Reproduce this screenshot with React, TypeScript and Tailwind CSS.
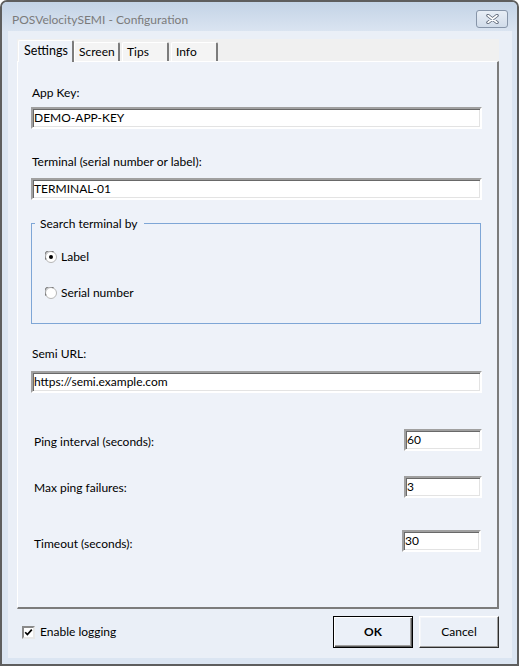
import React from "react";

const font = "font-['Lato','Noto_Sans',sans-serif]";

// Classic sunken edit box
function TextBox({ value, className = "" }: { value: string; className?: string }) {
  return (
    <div
      className={`h-[22px] flex items-center bg-white border-2 border-t-[#a0a0a0] border-l-[#a0a0a0] border-r-white border-b-white shadow-[inset_1px_1px_0_#696969,inset_-1px_-1px_0_#e3e3e3] pl-[1px] text-[12px] text-black ${className}`}
    >
      {value}
    </div>
  );
}

function Radio({ checked, label }: { checked?: boolean; label: string }) {
  return (
    <div className="flex items-center h-4">
      <svg width="12" height="12" viewBox="0 0 12 12" className="ml-[13px]">
        <circle cx="6" cy="6" r="5.5" fill="#ffffff" stroke="#b5b5b5" />
        <path d="M1.2 8.5 A5 5 0 0 1 8.5 1.2" fill="none" stroke="#7a7a7a" strokeWidth="1.1" />
        {checked && <circle cx="6" cy="6" r="2" fill="#000000" />}
      </svg>
      <span className="ml-[4px] text-[12px] text-black">{label}</span>
    </div>
  );
}

function NumberRow({ label, value, className = "", inputClass = "", labelClass = "" }: {
  label: string; value: string; className?: string; inputClass?: string; labelClass?: string;
}) {
  return (
    <div className={`flex items-center justify-between w-[451px] ${className}`}>
      <span className={`pl-[3px] text-[12px] leading-4 text-black ${labelClass}`}>{label}</span>
      <TextBox value={value} className={inputClass} />
    </div>
  );
}

const tabs = [
  { name: "Settings", w: "w-[56px]" },
  { name: "Screen", w: "w-[46px]" },
  { name: "Tips", w: "w-[47px]" },
  { name: "Info", w: "w-[47px]" },
];

export default function App() {
  return (
    <div className={`w-[519px] h-[666px] bg-white ${font}`}>
      <div className="w-[519px] h-[666px] flex flex-col border-2 border-[#5e5e5e] rounded-t-[7px] bg-[#dbe5f2] overflow-hidden">
        {/* Caption */}
        <div className="h-[29px] shrink-0 flex items-center justify-between bg-gradient-to-b from-[#c3d3e6] to-[#dae4f1] pl-[10px] pr-[9px]">
          <span className="text-[12px] text-[#7b7b7b] pt-[6px]">POSVelocitySEMI - Configuration</span>
          <div className="w-[32px] h-[18px] mt-[5px] rounded-[3px] border border-[#8795a9] bg-gradient-to-b from-[#e8eef6] to-[#d1dcea] flex items-center justify-center">
            <svg width="13" height="10" viewBox="0 0 13 10">
              <path d="M2 1.5 L11 8.5 M11 1.5 L2 8.5" stroke="#5c6677" strokeWidth="3.4" strokeLinecap="round" />
              <path d="M2 1.5 L11 8.5 M11 1.5 L2 8.5" stroke="#ffffff" strokeWidth="1.6" strokeLinecap="round" />
            </svg>
          </div>
        </div>

        {/* Client area */}
        <div className="ml-[6px] mr-[5px] mb-[6px] flex-1 flex flex-col bg-[#eaeff7] pt-[8px]">
          <div className="ml-[9px] w-[482px] flex flex-col">
            {/* Tab headers */}
            <div className="h-[22px] flex items-end bg-[#f0f0f0] pl-[1px] relative z-10">
              {tabs.map((t, i) =>
                i === 0 ? (
                  <div
                    key={t.name}
                    className={`${t.w} h-[22px] -mb-[1px] bg-[#eef2f9] border-l border-t border-white border-r-2 border-r-[#7c7c7c] rounded-t-[2px] pl-[5px] pt-[2px] text-[12.5px] text-black leading-4`}
                  >
                    {t.name}
                  </div>
                ) : (
                  <div
                    key={t.name}
                    className={`${t.w} h-[19px] ${i === 1 ? "ml-0" : "ml-[2px]"} bg-[#f4f4f4] border-l border-t border-white border-r-2 border-r-[#7c7c7c] rounded-t-[2px] pl-[4px] pt-[1px] text-[12px] text-black leading-4`}
                  >
                    {t.name}
                  </div>
                )
              )}
            </div>

            {/* Settings page */}
            <div className="h-[548px] bg-[#eef2f9] border-l border-t border-white border-r-2 border-b-2 border-r-[#7c7c7c] border-b-[#7c7c7c] pl-[13px] flex flex-col">
              <span className="mt-[23px] pl-[1px] text-[12px] leading-4 text-black">App Key:</span>
              <TextBox value="DEMO-APP-KEY" className="mt-[6px] w-[451px]" />

              <span className="mt-[25px] pl-[1px] text-[12px] leading-4 text-black">Terminal (serial number or label):</span>
              <TextBox value="TERMINAL-01" className="mt-[8px] w-[451px]" />

              <div className="mt-[23px] w-[450px] h-[101px] border border-[#7ea6d6] relative">
                <span className="absolute left-[3px] -top-[8px] pl-[5px] pr-[7px] bg-[#eef2f9] text-[12px] leading-4 text-black">
                  Search terminal by
                </span>
                <div className="mt-[25px]">
                  <Radio checked label="Label" />
                </div>
                <div className="mt-[20px]">
                  <Radio label="Serial number" />
                </div>
              </div>

              <span className="mt-[22px] pl-[1px] text-[12px] leading-4 text-black">Semi URL:</span>
              <TextBox value="https://semi.example.com" className="mt-[9px] w-[451px]" />

              <NumberRow label="Ping interval (seconds):" value="60" className="mt-[36px]" inputClass="w-[78px]" labelClass="pt-[3px]" />
              <NumberRow label="Max ping failures:" value="3" className="mt-[25px]" inputClass="w-[78px]" labelClass="pt-[2px]" />
              <NumberRow label="Timeout (seconds):" value="30" className="mt-[31px]" inputClass="w-[79px] mr-[1px]" labelClass="pt-[7px]" />
            </div>
          </div>

          {/* Footer */}
          <div className="flex items-center mt-[7px] pl-[14px] pr-[13px]">
            <div className="w-[13px] h-[13px] bg-white border-2 border-t-[#8a8a8a] border-l-[#8a8a8a] border-r-[#e8e8e8] border-b-[#e8e8e8] flex items-center justify-center mt-[1px]">
              <svg width="9" height="9" viewBox="0 0 9 9">
                <path d="M1.2 4.2 L3.4 6.6 L7.8 1.6" fill="none" stroke="#000000" strokeWidth="1.7" />
              </svg>
            </div>
            <span className="ml-[5px] text-[12px] text-black">Enable logging</span>

            <button className="ml-auto w-[80px] h-[32px] border border-black bg-[#ebf0f8] shadow-[inset_1px_1px_0_#ffffff,inset_-1px_-1px_0_#5a5a5a,inset_-2px_-2px_0_#a0a0a0] text-[12px] font-bold text-black">
              OK
            </button>
            <button className="ml-[6px] w-[80px] h-[32px] bg-[#ebf0f8] border border-t-white border-l-white border-r-[#2d2d2d] border-b-[#2d2d2d] shadow-[inset_-1px_-1px_0_#a0a0a0,inset_1px_1px_0_#f4f6fa] text-[12px] text-black">
              Cancel
            </button>
          </div>
        </div>
      </div>
    </div>
  );
}
